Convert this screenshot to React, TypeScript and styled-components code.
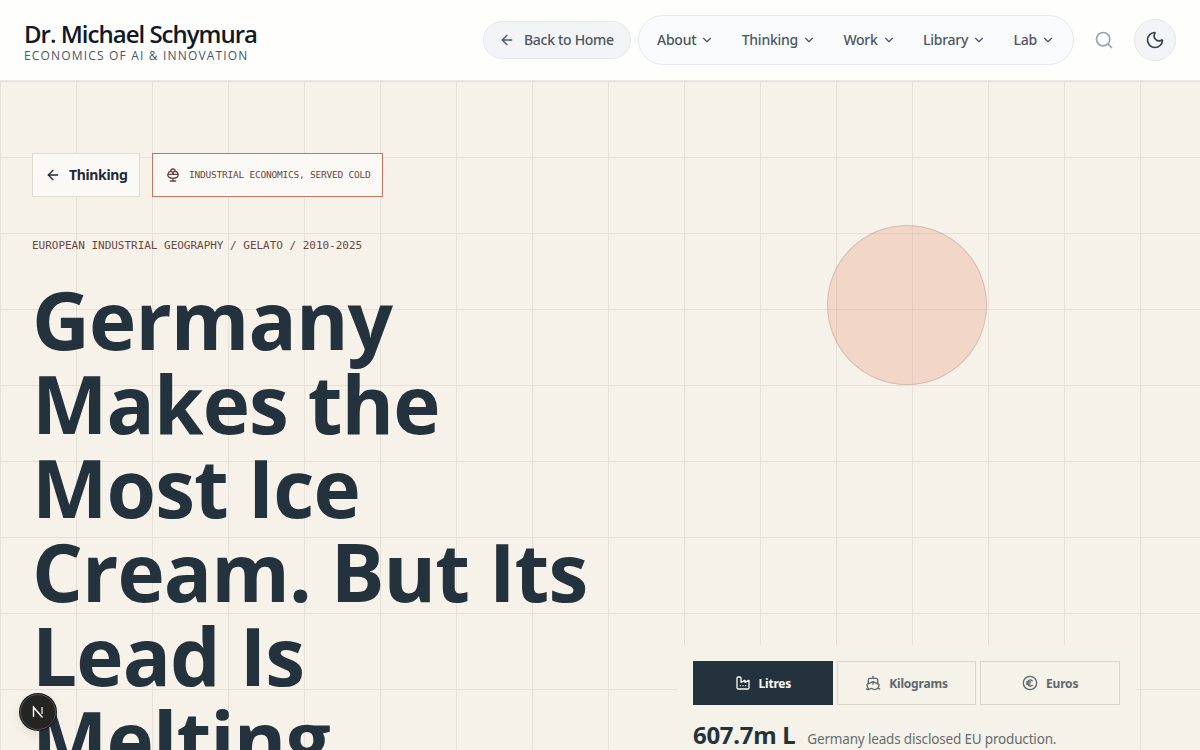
import React from 'react';
import styled, { createGlobalStyle } from 'styled-components';
import { ArrowLeft, ChevronDown, Search, Moon, IceCreamBowl, Factory, Ship } from 'lucide-react';

const Global = createGlobalStyle`
  html, body { margin: 0; padding: 0; height: 750px; overflow: hidden; }
  body { background: #f6f2e9; font-family: "Noto Sans", sans-serif; }
  * { box-sizing: border-box; }
`;

const Header = styled.header`
  height: 81px;
  background: #fefefd;
  border-bottom: 1px solid #e9e8e5;
  display: flex;
  align-items: center;
  justify-content: space-between;
  padding: 0 24px;
`;
const Brand = styled.div`
  display: flex;
  flex-direction: column;
  padding-top: 4px;
  font-family: "Open Sans", sans-serif;
`;
const BrandName = styled.div`
  font-size: 24px;
  line-height: 28px;
  font-weight: 600;
  color: #111827;
  letter-spacing: -1px;
`;
const BrandSub = styled.div`
  font-size: 12px;
  line-height: 16px;
  color: #4b5563;
  letter-spacing: 1.17px;
`;
const Nav = styled.nav`
  display: flex;
  align-items: center;
`;
const Label = styled.span`
  margin-bottom: 2px;
`;
const BackHome = styled.a`
  height: 38px;
  width: 148px;
  border-radius: 19px;
  background: #f3f4f6;
  border: 1px solid #e5e7eb;
  color: #4b5563;
  font-size: 14px;
  font-weight: 500;
  letter-spacing: -0.3px;
  display: flex;
  align-items: center;
  gap: 9px;
  padding-left: 15px;
  margin-right: 7px;
`;
const NavPill = styled.div`
  height: 50px;
  width: 436px;
  border-radius: 25px;
  background: #f9fafb;
  border: 1px solid #e5e7eb;
  display: flex;
  align-items: center;
  justify-content: space-between;
  padding: 0 18px;
  margin-right: 20px;
`;
const NavItem = styled.span`
  color: #4b5563;
  font-size: 14px;
  font-weight: 500;
  letter-spacing: -0.25px;
  display: flex;
  align-items: center;
  gap: 4px;
`;
const SearchButton = styled.span`
  color: #9ca3af;
  display: flex;
  margin-right: 20px;
`;
const ThemeButton = styled.span`
  width: 42px;
  height: 42px;
  border-radius: 50%;
  background: #f3f4f6;
  border: 1px solid #e5e7eb;
  color: #374151;
  display: flex;
  align-items: center;
  justify-content: center;
`;

const Main = styled.main`
  position: relative;
  height: 669px;
  overflow: hidden;
  padding: 72px 32px 0;
  background-color: #f6f2e9;
  background-image:
    linear-gradient(to right, #e6e1d8 1px, transparent 1px),
    linear-gradient(to bottom, #e6e1d8 1px, transparent 1px);
  background-size: 76px 76px;
`;
const Tags = styled.div`
  display: flex;
  gap: 12px;
`;
const BackTag = styled.a`
  height: 44px;
  width: 108px;
  background: #fbf9f5;
  border: 1px solid #e0dcd4;
  color: #1f2937;
  font-size: 14px;
  font-weight: 700;
  letter-spacing: -0.35px;
  display: flex;
  align-items: center;
  gap: 8px;
  padding-left: 12px;
`;
const ColdTag = styled.div`
  height: 44px;
  width: 231px;
  background: #fbf9f5;
  border: 1px solid #cc7360;
  color: #6a463e;
  font-family: "DejaVu Sans Mono", monospace;
  font-size: 9.5px;
  letter-spacing: -0.22px;
  display: flex;
  align-items: center;
  gap: 8px;
  padding-left: 12px;
`;
const Eyebrow = styled.div`
  margin-top: 41px;
  height: 15px;
  font-family: "DejaVu Sans Mono", monospace;
  font-size: 11px;
  line-height: 15px;
  letter-spacing: -0.02px;
  color: #6a463e;
`;
const Title = styled.h1`
  margin: 24px 0 0;
  width: 575px;
  font-family: "Open Sans", sans-serif;
  font-size: 80px;
  line-height: 84px;
  font-weight: 700;
  letter-spacing: -0.9px;
  color: #24323d;
`;
const Circle = styled.div`
  position: absolute;
  left: 827px;
  top: 144px;
  width: 160px;
  height: 160px;
  border-radius: 50%;
  background: rgba(232, 130, 100, 0.24);
  border: 1px solid rgba(120, 100, 95, 0.25);
`;
const Panel = styled.section`
  position: absolute;
  left: 677px;
  top: 564px;
  width: 459px;
  height: 120px;
  padding: 16px;
  background: #f5f2e9;
`;
const Units = styled.div`
  display: grid;
  grid-template-columns: repeat(3, 1fr);
  gap: 4px;
`;
const Unit = styled.button<{ $active?: boolean }>`
  height: 44px;
  background: ${p => (p.$active ? '#24323d' : 'transparent')};
  border: 1px solid ${p => (p.$active ? '#24323d' : '#d9d5c8')};
  color: ${p => (p.$active ? '#fbf9f5' : '#5f676e')};
  font-family: "Noto Sans", sans-serif;
  font-size: 12px;
  font-weight: 700;
  letter-spacing: -0.2px;
  display: flex;
  align-items: center;
  justify-content: center;
  gap: 8px;
  padding: 0;
`;
const Stat = styled.div`
  display: flex;
  align-items: baseline;
  gap: 12px;
  margin-top: 13px;
  color: #24323d;
`;
const StatValue = styled.span`
  font-size: 24px;
  line-height: 34px;
  font-weight: 700;
  letter-spacing: -0.3px;
`;
const StatNote = styled.span`
  font-size: 13.5px;
  letter-spacing: -0.17px;
  color: #666c70;
`;
const DevBadge = styled.div`
  position: fixed;
  left: 20px;
  top: 694px;
  width: 36px;
  height: 36px;
  border-radius: 50%;
  background: #262422;
  border: 1px solid #55524f;
  box-shadow: 0 0 0 1px #171514, 0 4px 12px rgba(0, 0, 0, 0.1);
  display: flex;
  align-items: center;
  justify-content: center;
`;

const EuroCircle = () => (
  <svg width="16" height="16" viewBox="0 0 24 24" fill="none" stroke="currentColor" strokeWidth="2" strokeLinecap="round" strokeLinejoin="round">
    <circle cx="12" cy="12" r="10" />
    <path d="M7 10.5h6M7 13.5h5M15.5 8.5a4.5 4.5 0 1 0 0 7" />
  </svg>
);

const nav = ['About', 'Thinking', 'Work', 'Library', 'Lab'];

export default function App() {
  return (
    <>
      <Global />
      <Header>
        <Brand>
          <BrandName>Dr. Michael Schymura</BrandName>
          <BrandSub>ECONOMICS OF AI &amp; INNOVATION</BrandSub>
        </Brand>
        <Nav>
          <BackHome><ArrowLeft size={16} /><Label>Back to Home</Label></BackHome>
          <NavPill>
            {nav.map(n => (
              <NavItem key={n}><Label>{n}</Label><ChevronDown size={14} /></NavItem>
            ))}
          </NavPill>
          <SearchButton><Search size={20} /></SearchButton>
          <ThemeButton><Moon size={20} /></ThemeButton>
        </Nav>
      </Header>
      <Main>
        <Tags>
          <BackTag><ArrowLeft size={16} /><Label>Thinking</Label></BackTag>
          <ColdTag><IceCreamBowl size={16} /><Label>INDUSTRIAL ECONOMICS, SERVED COLD</Label></ColdTag>
        </Tags>
        <Eyebrow>EUROPEAN INDUSTRIAL GEOGRAPHY / GELATO / 2010-2025</Eyebrow>
        <Title>Germany Makes the Most Ice Cream. But Its Lead Is Melting</Title>
        <Circle />
        <Panel>
          <Units>
            <Unit $active><Factory size={16} />Litres</Unit>
            <Unit><Ship size={16} />Kilograms</Unit>
            <Unit><EuroCircle />Euros</Unit>
          </Units>
          <Stat>
            <StatValue>607.7m L</StatValue>
            <StatNote>Germany leads disclosed EU production.</StatNote>
          </Stat>
        </Panel>
      </Main>
      <DevBadge>
        <svg width="16" height="16" viewBox="0 0 16 16" fill="none">
          <path d="M3.5 13V3.2L12.5 13.5" stroke="#fff" strokeWidth="1.4" />
          <path d="M12 3v7" stroke="#ddd" strokeWidth="1.4" />
        </svg>
      </DevBadge>
    </>
  );
}
